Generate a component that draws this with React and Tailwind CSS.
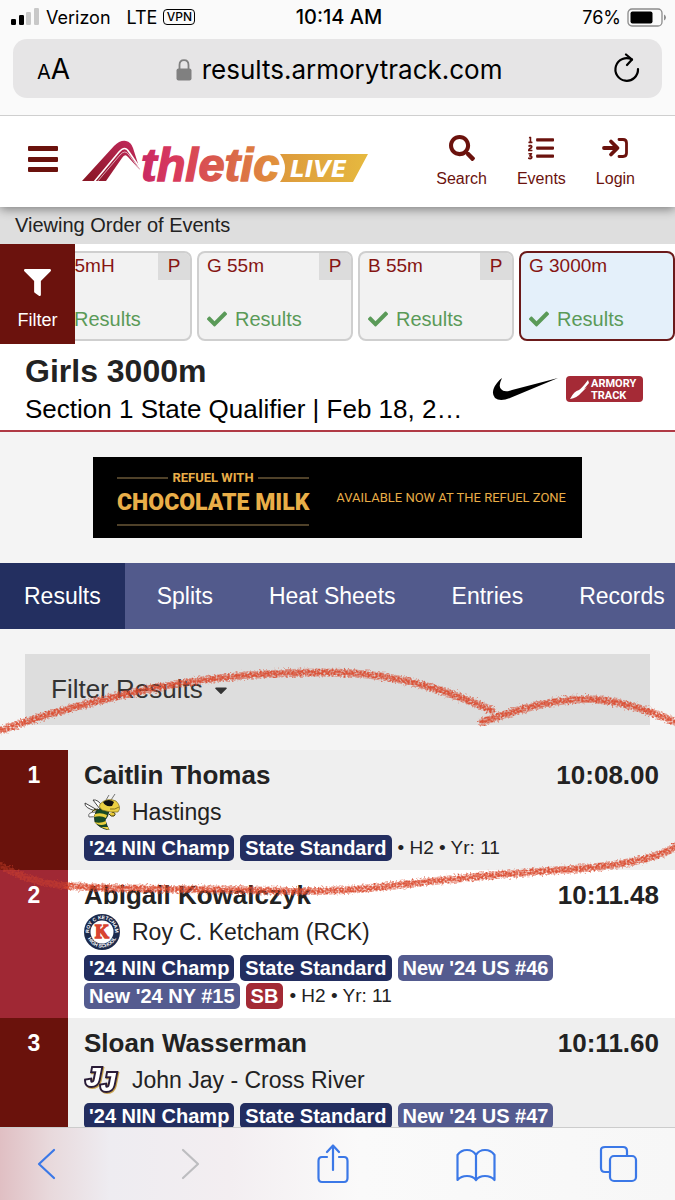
import { FaSearch, FaFilter, FaCheck, FaCaretDown, FaListOl } from 'react-icons/fa';

// ── Data ───────────────────────────────────────────────────────────────────────
const events = [
  { id: 1, name: 'B 55mH', round: 'P' },
  { id: 2, name: 'G 55m', round: 'P' },
  { id: 3, name: 'B 55m', round: 'P' },
  { id: 4, name: 'G 3000m', active: true },
];

const tabs = ['Results', 'Splits', 'Heat Sheets', 'Entries', 'Records'];

const results = [
  {
    place: 1,
    name: 'Caitlin Thomas',
    school: 'Hastings',
    logo: HornetLogo,
    time: '10:08.00',
    tags: [
      { text: "'24 NIN Champ", tone: 'navy' },
      { text: 'State Standard', tone: 'navy' },
    ],
    info: '• H2 • Yr: 11',
  },
  {
    place: 2,
    name: 'Abigail Kowalczyk',
    school: 'Roy C. Ketcham (RCK)',
    logo: KetchamLogo,
    time: '10:11.48',
    tags: [
      { text: "'24 NIN Champ", tone: 'navy' },
      { text: 'State Standard', tone: 'navy' },
      { text: "New '24 US #46", tone: 'slate' },
      { text: "New '24 NY #15", tone: 'slate' },
      { text: 'SB', tone: 'red' },
    ],
    info: '• H2 • Yr: 11',
  },
  {
    place: 3,
    name: 'Sloan Wasserman',
    school: 'John Jay - Cross River',
    logo: JohnJayLogo,
    time: '10:11.60',
    tags: [
      { text: "'24 NIN Champ", tone: 'navy' },
      { text: 'State Standard', tone: 'navy' },
      { text: "New '24 US #47", tone: 'slate' },
    ],
  },
];

const tones = {
  navy: 'bg-[#232e60]',
  slate: 'bg-[#545b8f]',
  red: 'bg-[#a32a35]',
};

// ── School logos ───────────────────────────────────────────────────────────────
function HornetLogo() {
  return (
    <svg width="36" height="36" viewBox="0 0 36 36" aria-hidden="true">
      <path d="M22 6 L25 1 M27 6 L31 0" stroke="#555" strokeWidth="0.8" fill="none" />
      <path d="M15 17 L1 9 Q0 14 12 17 Z M16 15 L9 6 Q14 5 19 13 Z" fill="#fff" stroke="#333" strokeWidth="0.9" />
      <path d="M12 18 Q3 18 5 23 Q10 24 13 20 Z" fill="#fff" stroke="#444" strokeWidth="0.8" />
      <path d="M14 15 Q9 15 8 18 M28 18 Q33 19 30 22 Q27 23 25 20" fill="#e8c936" stroke="#3a3510" strokeWidth="1" />
      <path d="M13 16 Q21 13 25 17 Q24 23 21 26 Q23 32 25 36 Q15 34 11 28 Q9 22 13 16 Z" fill="#174a26" stroke="#13261a" strokeWidth="0.8" />
      <path d="M11 20 Q17 18 23 21 L22 24 Q17 21 10 23 Z M10 28 Q16 30 22 27 L22 30 Q17 32 13 30 Z M17 33 L24 33 L25 36 Z" fill="#e9cf3d" />
      <path d="M16 10 Q23 3 32 7 Q38 13 34 18 Q27 19 18 16 Q14 13 16 10 Z" fill="#ecd043" stroke="#6b5c18" strokeWidth="0.6" />
      <path d="M19 8 Q25 4 30 8 L28 12 Q21 13 19 8 Z" fill="#111" />
      <path d="M26 15 Q31 16 35 13" stroke="#6b5c18" strokeWidth="0.8" fill="none" />
    </svg>
  );
}

function KetchamLogo() {
  return (
    <svg width="36" height="36" viewBox="0 0 36 36" aria-hidden="true">
      <defs>
        <path id="ring-top" d="M5 18 A13 13 0 0 1 31 18" />
        <path id="ring-bottom" d="M2.5 18 A15.5 15.5 0 0 0 33.5 18" />
      </defs>
      <circle cx="18" cy="18" r="18" fill="#1c2a4c" />
      <circle cx="18" cy="18" r="11.5" fill="#fff" />
      <g fill="#fff" fontFamily="Liberation Sans, sans-serif" fontWeight="bold" fontSize="5">
        <text><textPath href="#ring-top" startOffset="50%" textAnchor="middle">ROY C KETCHAM</textPath></text>
        <text><textPath href="#ring-bottom" startOffset="50%" textAnchor="middle">HIGH SCHOOL</textPath></text>
      </g>
      <text x="18" y="24" textAnchor="middle" fontFamily="Liberation Serif, serif" fontWeight="bold" fontSize="18" fill="#d8432f" stroke="#d8432f" strokeWidth="1.4">
        K
      </text>
    </svg>
  );
}

function JohnJayLogo() {
  return (
    <svg width="36" height="36" viewBox="0 0 36 36" aria-hidden="true" className="[filter:drop-shadow(1px_1px_0_#c9a24a)]">
      <text
        x="1 16"
        y="24 29"
        fontFamily="Liberation Mono, monospace"
        fontWeight="bold"
        fontStyle="italic"
        fontSize="28"
        fill="#fff"
        stroke="#2a1c38"
        strokeWidth="4"
        paintOrder="stroke"
      >
        JJ
      </text>
    </svg>
  );
}

// ── Brand marks ────────────────────────────────────────────────────────────────
function AthleticLiveLogo() {
  return (
    <svg width="288" height="48" viewBox="0 0 288 48" role="img" aria-label="AthleticLIVE" className="shrink-0">
      <defs>
        <linearGradient id="word" gradientUnits="userSpaceOnUse" x1="60" y1="0" x2="200" y2="0">
          <stop offset="0" stopColor="#c92a63" />
          <stop offset="0.25" stopColor="#d93a5c" />
          <stop offset="0.6" stopColor="#d9624a" />
          <stop offset="1" stopColor="#e2973a" />
        </linearGradient>
        <linearGradient id="peak" x1="0" y1="1" x2="1" y2="0">
          <stop offset="0" stopColor="#861522" />
          <stop offset="1" stopColor="#c42a5e" />
        </linearGradient>
        <linearGradient id="flag" x1="0" y1="0" x2="1" y2="0">
          <stop offset="0" stopColor="#dd9a3c" />
          <stop offset="1" stopColor="#e6b93f" />
        </linearGradient>
      </defs>
      <path d="M0 43 L32 8 Q38 2 44 3 Q49 4 51 10 L58 32 L46 19 Q43 15 40 20 L24 43 Z" fill="url(#peak)" />
      <path d="M12 44 L37 14 Q43 7 47 14 L58 30" fill="none" stroke="#fff" strokeWidth="1.6" />
      <path d="M15 44 L38 17 Q43 11 47 17 L58 32" fill="none" stroke="#fff" strokeWidth="0.6" />
      <text x="59" y="43" fontFamily="Liberation Sans, sans-serif" fontWeight="bold" fontStyle="italic" fontSize="47" fill="url(#word)" stroke="url(#word)" strokeWidth="1.4">
        thletic
      </text>
      <path d="M198 16 H286 L271 44 H198 Q208 30 198 16 Z" fill="url(#flag)" />
      <text x="208" y="39" fontFamily="DejaVu Sans, sans-serif" fontWeight="bold" fontStyle="italic" fontSize="23" fill="#fff">
        LIVE
      </text>
    </svg>
  );
}

function SponsorLogos() {
  return (
    <div className="flex shrink-0 items-center gap-2">
      <svg width="66" height="25" viewBox="0 0 66 25" role="img" aria-label="Nike">
        <path d="M66 2 L18 22 Q8 26 3 22 Q-2 16 5 7 Q7 4 10 2 Q6 10 9 13 Q12 17 20 14 Z" fill="#000" />
      </svg>
      <svg width="77" height="26" viewBox="0 0 77 26" role="img" aria-label="Armory Track">
        <rect width="77" height="26" rx="4" fill="#a52a36" />
        <path d="M4 23 Q8 15 13 14 Q16 12 22 4 L23 7 L18 13 L21 11 L15 17 Q11 22 4 23 Z" fill="#fff" />
        <g fill="#fff" fontFamily="Roboto, sans-serif" fontWeight="bold" fontSize="11">
          <text x="25" y="11">ARMORY</text>
          <text x="25" y="23">TRACK</text>
        </g>
      </svg>
    </div>
  );
}

// ── Browser chrome ─────────────────────────────────────────────────────────────
function StatusBar() {
  return (
    <div className="grid grid-cols-[1fr_auto_1fr] items-center h-[34px] pl-[11px] pr-2 font-['Inter',sans-serif] text-[18px] text-black">
      <div className="flex items-center">
        <svg width="28" height="18" viewBox="0 0 28 18" className="mr-[7px]" aria-hidden="true">
          <rect x="0" y="11" width="5" height="6" rx="1.2" fill="#000" />
          <rect x="8" y="7" width="5" height="10" rx="1.2" fill="#000" />
          <rect x="15" y="4" width="5" height="13" rx="1.2" fill="#c8c8c8" />
          <rect x="23" y="0" width="5" height="17" rx="1.2" fill="#c8c8c8" />
        </svg>
        <span className="mr-4">Verizon</span>
        <span className="mr-1.5">LTE</span>
        <span className="flex items-center justify-center h-4 w-8 rounded border border-black text-[12px] font-medium">VPN</span>
      </div>
      <span className="text-[20px] font-medium">10:14 AM</span>
      <div className="flex items-center justify-end gap-1.5">
        <span>76%</span>
        <svg width="40" height="19" viewBox="0 0 40 19" aria-hidden="true">
          <rect x="1" y="1" width="34" height="17" rx="4" fill="none" stroke="#8c8c8c" strokeWidth="1.3" />
          <rect x="3.5" y="3.5" width="22" height="12" rx="2" fill="#000" />
          <path d="M37 6.5 Q39 7.5 39 9.5 Q39 11.5 37 12.5 Z" fill="#8c8c8c" />
        </svg>
      </div>
    </div>
  );
}

function AddressBar() {
  return (
    <div className="px-[13px] pt-[5px] pb-[17px] border-b border-[#cfcfcf]">
      <div className="flex items-center h-[59px] rounded-[14px] bg-[#e6e5e6] pl-6 pr-5 font-['Inter',sans-serif] text-black">
        <button aria-label="Text size" className="flex items-baseline">
          <span className="text-[20px]">A</span>
          <span className="text-[28px]">A</span>
        </button>
        <button className="flex flex-1 items-center justify-center gap-2.5 pt-0.5 pr-1 text-[26px]">
          <svg width="16" height="22" viewBox="0 0 16 22" aria-hidden="true">
            <path d="M3.5 10 V6 Q3.5 1.2 8 1.2 Q12.5 1.2 12.5 6 V10" fill="none" stroke="#808080" strokeWidth="1.8" />
            <rect x="0.5" y="9.5" width="15" height="12" rx="2" fill="#808080" />
          </svg>
          results.armorytrack.com
        </button>
        <button aria-label="Reload">
          <svg width="30" height="32" viewBox="0 0 30 32" fill="none" stroke="#000" strokeWidth="2.2" strokeLinecap="round" strokeLinejoin="round">
            <path d="M26 16 A11.3 11.3 0 1 1 20 6.5" />
            <path d="M14 1.5 L20 6.5 L15 12" />
          </svg>
        </button>
      </div>
    </div>
  );
}

function ToolbarButton({ label, disabled, children }) {
  return (
    <button aria-label={label} disabled={disabled} className={`flex justify-center w-10 ${disabled ? 'text-[#bdbdc0]' : 'text-[#3b78e7]'}`}>
      <svg width="40" height="40" viewBox="0 0 40 40" fill="none" stroke="currentColor" strokeWidth="2.2" strokeLinecap="round" strokeLinejoin="round">
        {children}
      </svg>
    </button>
  );
}

function Toolbar() {
  return (
    <nav className="relative z-20 flex items-start justify-between h-[73px] shrink-0 border-t border-[#cccccc] pl-[27px] pr-9 pt-4 bg-[linear-gradient(to_right,#e0bfc3_0px,#e8d9dc_50px,#eeecf1_110px,#f3eef1_230px,#fafafa_360px,#f7f7f7_100%)]">
      <ToolbarButton label="Back">
        <path d="M27 6 L12 20 L27 34" />
      </ToolbarButton>
      <ToolbarButton label="Forward" disabled>
        <path d="M13 6 L28 20 L13 34" />
      </ToolbarButton>
      <ToolbarButton label="Share">
        <path d="M14 13 H9 Q5.5 13 5.5 17 V34 Q5.5 38 9 38 H31 Q34.5 38 34.5 34 V17 Q34.5 13 31 13 H26" />
        <path d="M20 26 V1.5 M14 8 L20 1.5 L26 8" />
      </ToolbarButton>
      <ToolbarButton label="Bookmarks">
        <path d="M20 11 Q17 6 11 6 Q5 6 1.5 11 V36 Q5 32 11 32 Q17 32 20 36 Q23 32 29 32 Q35 32 38.5 36 V11 Q35 6 29 6 Q23 6 20 11 V36" />
      </ToolbarButton>
      <ToolbarButton label="Tabs">
        <rect x="11" y="12" width="26" height="25" rx="4" />
        <path d="M11 28 H6 Q2 28 2 24 V6 Q2 3 6 3 H24 Q28 3 28 7 V12" />
      </ToolbarButton>
    </nav>
  );
}

// ── Page sections ──────────────────────────────────────────────────────────────
function SiteHeader() {
  return (
    <header className="relative z-10 flex items-center h-[91px] shrink-0 bg-white pl-[27px] pr-10 shadow-[0_2px_10px_rgba(0,0,0,0.45)] text-[#6b120d]">
      <button aria-label="Menu" className="mr-[23px] pb-[6px]">
        <svg width="32" height="28" viewBox="0 0 32 28" fill="currentColor">
          <rect x="1" y="1" width="30" height="5" rx="1" />
          <rect x="1" y="12" width="30" height="5" rx="1" />
          <rect x="1" y="22" width="30" height="5" rx="1" />
        </svg>
      </button>
      <AthleticLiveLogo />
      <nav className="flex flex-1 justify-end gap-[30px] text-[16px] leading-5">
        <a href="#search" className="flex flex-col items-center gap-2">
          <FaSearch className="size-[26px]" />
          Search
        </a>
        <a href="#events" className="flex flex-col items-center gap-2">
          <FaListOl className="size-[26px]" />
          Events
        </a>
        <a href="#login" className="flex flex-col items-center gap-2">
          <svg width="26" height="26" viewBox="0 0 26 26" fill="none" stroke="currentColor" strokeLinecap="round" strokeLinejoin="round">
            <path d="M2 13 H15 M9 6.5 L15.5 13 L9 19.5" strokeWidth="3.8" />
            <path d="M17 4.5 H21 Q24.5 4.5 24.5 8 V18 Q24.5 21.5 21 21.5 H17" strokeWidth="2.8" />
          </svg>
          Login
        </a>
      </nav>
    </header>
  );
}

function EventCard({ event }) {
  return (
    <a
      href={`#event-${event.id}`}
      className={`flex flex-col justify-between w-[156px] h-[90px] shrink-0 rounded-lg border-2 overflow-hidden ${
        event.active ? 'bg-[#e4f0fa] border-[#6b1a1a]' : 'bg-[#f2f2f2] border-[#cfcfcf]'
      }`}
    >
      <div className="flex justify-between h-[27px] pl-2 text-[19px] leading-[26px] text-[#861512]">
        {event.name}
        {event.round && <span className="w-8 bg-[#dcdcdc] text-center">{event.round}</span>}
      </div>
      <div className="flex items-center gap-2 h-10 pl-2 text-[20px] text-[#5a9a58]">
        <FaCheck className="size-5" />
        Results
      </div>
    </a>
  );
}

function EventStrip() {
  return (
    <div className="flex shrink-0 h-[100px] bg-white">
      <button className="flex flex-col items-center justify-end gap-3 w-[75px] shrink-0 bg-[#6b120d] pb-3 text-[18px] leading-6 text-white">
        <FaFilter className="size-[27px]" />
        Filter
      </button>
      <div className="flex flex-1 justify-end items-start gap-[5px] overflow-hidden pt-[7px]">
        {events.map(event => (
          <EventCard key={event.id} event={event} />
        ))}
      </div>
    </div>
  );
}

function EventTitle() {
  return (
    <div className="flex shrink-0 items-center justify-between h-[88px] bg-white border-b-2 border-[#b03a45] pl-[25px] pr-8 pt-[3px]">
      <div className="w-[440px]">
        <h1 className="text-[32px] leading-[40px] font-bold text-[#222]">Girls 3000m</h1>
        <p className="text-[26px] leading-9 text-black truncate">Section 1 State Qualifier | Feb 18, 2024</p>
      </div>
      <SponsorLogos />
    </div>
  );
}

function MilkAd() {
  return (
    <a href="#refuel" className="mx-auto my-[25px] flex w-[489px] max-w-full h-[81px] shrink-0 items-center justify-between bg-black pl-6 pr-4 font-['Roboto',sans-serif] text-[#e9ae48] whitespace-nowrap">
      <div className="w-48">
        <div className="flex items-center gap-1 text-[13px] leading-4 font-bold">
          <span className="h-0.5 flex-1 bg-[#4f4129]" />
          REFUEL WITH
          <span className="h-0.5 flex-1 bg-[#4f4129]" />
        </div>
        <div className="text-[23px] leading-[34px] font-black text-center">CHOCOLATE MILK</div>
        <div className="mt-1 h-0.5 bg-[#4f4129]" />
      </div>
      <span className="text-[13px]">AVAILABLE NOW AT THE REFUEL ZONE</span>
    </a>
  );
}

function TabBar() {
  return (
    <nav className="flex shrink-0 gap-2 h-[66px] bg-[#525a8c] text-[23px] leading-[66px] text-white whitespace-nowrap overflow-hidden">
      {tabs.map((tab, i) => (
        <a key={tab} href={`#${tab}`} className={i === 0 ? 'px-6 bg-[#232f60]' : 'px-6'}>
          {tab}
        </a>
      ))}
    </nav>
  );
}

function ResultRows({ result }) {
  const Logo = result.logo;
  const odd = result.place % 2 === 1;
  return (
    <tbody className={odd ? 'bg-[#efefef]' : 'bg-white'}>
      <tr>
        <td rowSpan={2} className={`w-[68px] pt-2 align-top text-center text-[23px] leading-[34px] font-bold text-white ${odd ? 'bg-[#6a120c]' : 'bg-[#a02834]'}`}>
          {result.place}
        </td>
        <td className="pl-4 pt-2 text-[26px] leading-[34px] font-bold">{result.name}</td>
        <td className="pr-4 pt-2 text-right text-[26px] leading-[34px] font-bold">{result.time}</td>
      </tr>
      <tr>
        <td colSpan={2} className="pl-4 pr-4 pb-[9px] align-top">
          <div className="flex items-center gap-3 h-10 text-[23px]">
            <Logo />
            {result.school}
          </div>
          <div className="flex flex-wrap items-center gap-x-1.5 gap-y-0.5 pt-[3px]">
            {result.tags.map(tag => (
              <span key={tag.text} className={`h-[26px] rounded-[5px] px-[5px] text-[20px] leading-[26px] font-bold text-white ${tones[tag.tone]}`}>
                {tag.text}
              </span>
            ))}
            {result.info && <span className="text-[19px] leading-[26px]">{result.info}</span>}
          </div>
        </td>
      </tr>
    </tbody>
  );
}

// Hand-drawn crayon loop around the first result
function CrayonCircle() {
  return (
    <svg viewBox="0 0 675 290" className="absolute inset-x-0 top-0 w-full pointer-events-none" aria-hidden="true">
      <defs>
        <filter id="crayon" filterUnits="userSpaceOnUse" x="-10" y="0" width="695" height="290" colorInterpolationFilters="sRGB">
          <feTurbulence type="fractalNoise" baseFrequency="0.5" numOctaves="2" seed="4" result="noise" />
          <feDisplacementMap in="SourceGraphic" in2="noise" scale="7" xChannelSelector="R" yChannelSelector="G" result="rough" />
          <feColorMatrix in="noise" type="matrix" values="0 0 0 0 0  0 0 0 0 0  0 0 0 0 0  0 0 2 0 -0.15" result="grain" />
          <feComposite in="rough" in2="grain" operator="in" />
        </filter>
      </defs>
      <g fill="none" stroke="#d9482c" strokeLinecap="round" filter="url(#crayon)">
        <g strokeWidth="8" opacity="0.55">
          <path d="M-4 103 C40 87 100 70 150 60 C220 45 300 42 350 44 C400 47 445 60 491 81" />
          <path d="M482 93 C520 80 550 71 585 70 C620 71 645 80 680 95" />
          <path d="M680 215 C655 232 610 238 560 241 C500 245 440 251 390 257 C330 264 300 262 240 261 C180 259 120 261 68 257" />
        </g>
        <g strokeWidth="5" opacity="0.85">
          <path d="M-4 103 C40 87 100 70 150 60 C220 45 300 42 350 44 C400 47 445 60 491 81" />
          <path d="M482 93 C520 80 550 71 585 70 C620 71 645 80 680 95" />
          <path d="M680 215 C655 232 610 238 560 241 C500 245 440 251 390 257 C330 264 300 262 240 261 C180 259 120 261 68 257" />
        </g>
        <path d="M68 257 C40 255 20 247 -4 234" strokeWidth="7" opacity="0.45" />
      </g>
    </svg>
  );
}

export default function App() {
  return (
    <div className="flex flex-col h-screen overflow-hidden bg-[#f4f4f4] font-['Liberation_Sans',Arial,sans-serif] text-[#222]">
      <div className="shrink-0 bg-[#fafafa]">
        <StatusBar />
        <AddressBar />
      </div>

      <main className="flex flex-col flex-1 min-h-0 overflow-hidden">
        <SiteHeader />
        <div className="h-[37px] shrink-0 bg-[#dedede] pl-[15px] text-[20px] leading-9">Viewing Order of Events</div>
        <EventStrip />
        <EventTitle />
        <MilkAd />
        <TabBar />

        <section className="relative shrink-0">
          <button className="flex items-center gap-2 w-[calc(100%-50px)] h-[71px] mx-[25px] my-[25px] bg-[#dddddd] pl-[26px] text-[26px] text-[#333]">
            Filter Results
            <FaCaretDown className="size-5" />
          </button>
          <table className="w-full border-collapse">
            {results.map(result => (
              <ResultRows key={result.place} result={result} />
            ))}
          </table>
          <CrayonCircle />
        </section>
      </main>

      <Toolbar />
    </div>
  );
}
